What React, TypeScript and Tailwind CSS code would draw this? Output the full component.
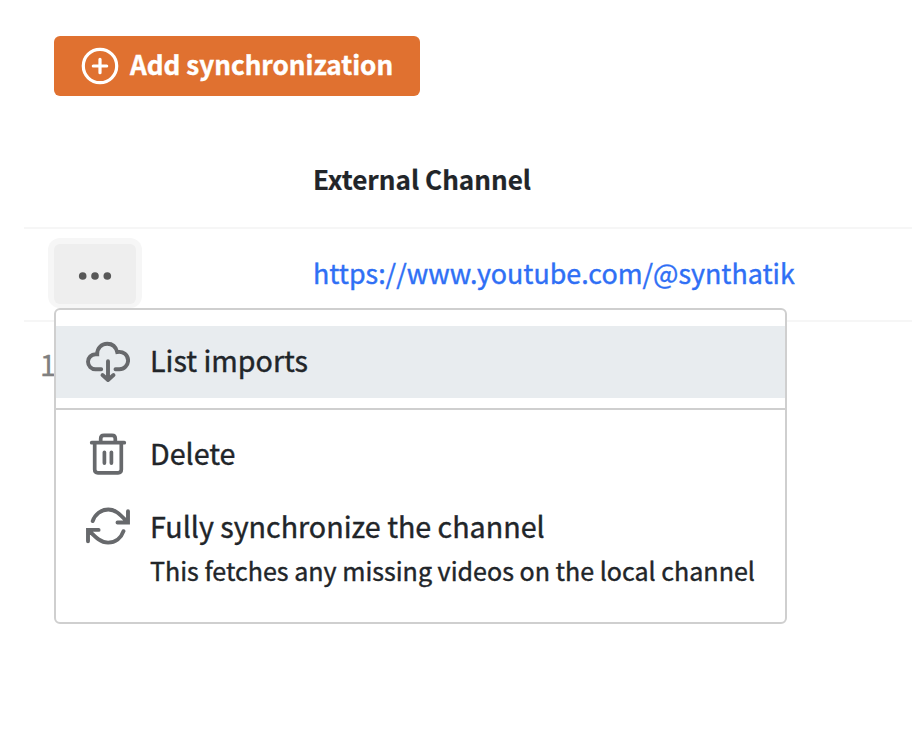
import type { ReactNode } from "react";

function PlusCircle() {
  return (
    <svg className="block h-[38px] w-[38px] shrink-0" viewBox="0 0 38 38" fill="none" stroke="currentColor" strokeWidth="3.2" strokeLinecap="round">
      <circle cx="19" cy="19" r="16.7" />
      <path d="M19 12.3v13.4M12.3 19h13.4" />
    </svg>
  );
}

function Dots() {
  return (
    <svg className="block h-2 w-[34px]" viewBox="0 0 34 8" fill="currentColor">
      <circle cx="4.7" cy="4" r="3.8" />
      <circle cx="17" cy="4" r="3.8" />
      <circle cx="29.3" cy="4" r="3.8" />
    </svg>
  );
}

function CloudDownload() {
  return (
    <svg className="block h-11 w-11 shrink-0" viewBox="0 0 44 44" fill="none" stroke="currentColor" strokeWidth="3.9" strokeLinecap="round">
      <path d="M15.2 29.3H9.5A7.5 7.5 0 0 1 9.5 14.3H11.2C11 8.3 15.5 3.7 21.2 3.7C26.3 3.7 30 7 31.2 12.1C37.3 11 42.1 15 42.1 20.5C42.1 25.3 38.2 29.3 33.4 29.3H29.5" />
      <path d="M22 21.3V39.5M16.5 35L22 40L27.5 35" strokeLinejoin="round" />
    </svg>
  );
}

function Trash() {
  return (
    <svg className="block h-11 w-11 shrink-0" viewBox="0 0 44 44" fill="none" stroke="currentColor" strokeWidth="3.7" strokeLinecap="round">
      <path d="M5.7 9.7H38.3M8.7 10V36.6Q8.7 39.8 11.9 39.8H32.1Q35.3 39.8 35.3 36.6V10M14.7 9V5.7Q14.7 2.4 18 2.4H26Q29.3 2.4 29.3 5.7V9M18.4 19.3V30.1M25.4 19.3V30.1" />
    </svg>
  );
}

function Refresh() {
  return (
    <svg className="block h-11 w-11 shrink-0" viewBox="0 0 44 44" fill="none" stroke="currentColor" strokeWidth="3.9" strokeLinecap="round">
      <path d="M6.7 16.1C9 9.4 15 4.5 22.3 4.5C29.5 4.5 33.5 8.9 41.5 17.1M42 6.2V17.5H31.5" />
      <path d="M37.5 26.2C35.2 33 29.5 37.6 22.1 37.6C14.8 37.6 10.5 33.2 2.6 25.2M2 36.2V24.9H12.6" />
    </svg>
  );
}

function MenuItem({ icon, children }: { icon: ReactNode; children: ReactNode }) {
  return (
    <div className="flex h-[72px] items-center gap-5 px-[30px]">
      <span className="text-[#67696c]">{icon}</span>
      <span className="pb-1 text-[28.65px] leading-[40px] whitespace-nowrap">{children}</span>
    </div>
  );
}

export default function App() {
  return (
    <div className="h-[752px] w-[912px] overflow-hidden bg-white pt-9 font-['Noto_Sans_CJK_SC',sans-serif] text-[#212529] [-webkit-text-stroke:0.4px_currentColor]">
      <button className="ml-[54px] flex h-[60px] w-[366px] items-center gap-[11px] rounded-md bg-[#e07130] pl-[27px] text-[26.1px] font-bold whitespace-nowrap text-white">
        <PlusCircle />
        <span className="pb-1 leading-[40px]">Add synchronization</span>
      </button>

      <div className="mt-[38px] ml-6">
        <div className="flex h-[95px] items-center border-b-2 border-[#f6f6f6] pb-[3px] pl-[289px] text-[26.1px] font-bold [-webkit-text-stroke:0.2px_currentColor]">
          <span className="leading-[40px]">External Channel</span>
        </div>
        <div className="flex h-[93px] items-center border-b-2 border-[#f6f6f6] pb-[3px] pl-6">
          <div className="relative h-[70px] w-[94px] rounded-xl bg-[#f6f6f6] p-[6px]">
            <button className="flex h-[60px] w-[82px] items-center justify-center rounded-md bg-[#eeeeee] pt-1 text-[#585858]">
              <Dots />
            </button>
            <div className="absolute top-[70px] left-[6px] h-[316px] w-[733px] rounded-md border-2 border-[#cfcfcf] bg-white pt-4">
              <div className="bg-[#e8ecef]">
                <MenuItem icon={<CloudDownload />}>List imports</MenuItem>
              </div>
              <div className="mt-[10px] mb-[9px] h-[2px] bg-[#cfcfcf]" />
              <MenuItem icon={<Trash />}>Delete</MenuItem>
              <MenuItem icon={<Refresh />}>
                <span className="relative top-px">Fully synchronize the channel</span>
              </MenuItem>
              <p className="-mt-[13px] pl-[94px] text-[25.05px] leading-[40px] whitespace-nowrap">This fetches any missing videos on the local channel</p>
            </div>
          </div>
          <a className="ml-[171px] pb-px text-[26.85px] leading-[40px] text-[#2f6ff5]">https://www.youtube.com/@synthatik</a>
        </div>
        <div className="mt-[22px] ml-[16px] text-[28.6px] leading-[40px] text-[#808080] [-webkit-text-stroke:0.3px_currentColor]">1</div>
      </div>
    </div>
  );
}
